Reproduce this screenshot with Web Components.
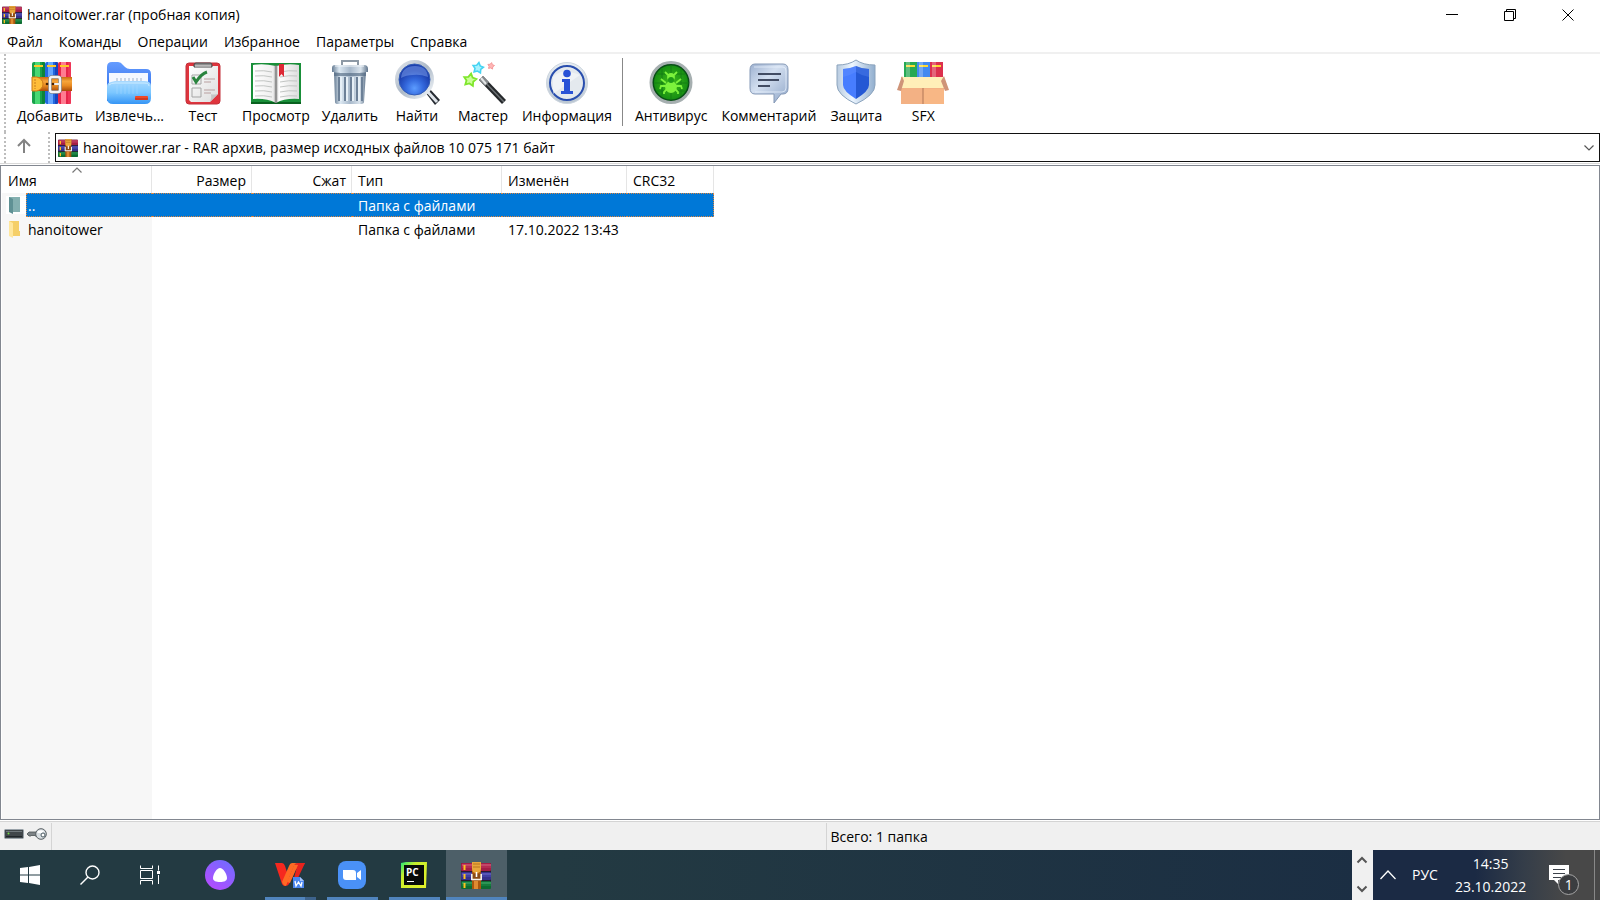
<!DOCTYPE html>
<html lang="ru">
<head>
<meta charset="utf-8">
<title>hanoitower.rar (пробная копия)</title>
<style>
  body {
    margin: 0;
    font: 14px/20px "Open Sans", "Noto Sans", sans-serif;
    color: #000;
    background: #fff;
  }
</style>
</head>
<body>
<archive-window></archive-window>

<script>
const books = (x, c1, c2, c3) => `
  <rect x="${x}" y="2" width="13" height="42" rx="2" fill="${c1}"/>
  <rect x="${x + 3}" y="2" width="5" height="42" fill="${c2}"/>
  <rect x="${x + 10}" y="2" width="3" height="42" rx="1" fill="${c3}"/>
  <rect x="${x + 2}" y="5" width="9" height="2" fill="#ffc928"/>`;

const star = (cx, cy, r) => {
  const points = [];
  for (let i = 0; i < 10; i++) {
    const a = Math.PI * i / 5 - 1.4;
    const d = i % 2 ? r * 0.55 : r;
    points.push(`${(cx + d * Math.cos(a)).toFixed(1)},${(cy + d * Math.sin(a)).toFixed(1)}`);
  }
  return points.join(" ");
};

const ICONS = {
  rar: ["0 0 30 27", `
    <rect y="1" width="30" height="25" rx="1" fill="#2b1a30"/>
    <rect y="1" width="30" height="8" rx="1" fill="#a51d45"/>
    <path d="M1 3h29" stroke="#e0708c"/><path d="M1 5h29" stroke="#c23a60"/>
    <rect y="10" width="30" height="8" rx="1" fill="#35308c"/>
    <path d="M1 12h29" stroke="#7a7ae0"/><path d="M1 14h29" stroke="#4c4cb8"/>
    <rect y="19" width="30" height="8" rx="1" fill="#0d6b31"/>
    <path d="M1 21h29" stroke="#4fc07a"/><path d="M1 23h29" stroke="#1f8f48"/>
    <path d="M3.500 3v5M3.500 12v5M3.500 21v5" stroke="#ffc21f" stroke-width="2"/>
    <path d="M11 0h9v27h-9z" fill="#a9560f"/>
    <path d="M11 0h9v7q0 4-4.500 4T11 7z" fill="#e9a63b"/>
    <path d="M13 19h4v8h-4z" fill="#df8a31"/>
    <path d="M12 2h7M12 5h7" stroke="#b87420"/>
    <path d="M10.800 12v5.500h9.400V12" fill="#8a4a16" stroke="#f4f1eb" stroke-width="1.600"/>
    <path d="M15.500 10v5" stroke="#fff" stroke-width="1.600"/>`],
  add: ["-1 0 48 48", `
    <defs><linearGradient id="b" x2="0" y2="1"><stop stop-color="#c96a12"/><stop offset=".3" stop-color="#f6a63b"/><stop offset=".6" stop-color="#ea8c22"/><stop offset="1" stop-color="#a94b08"/></linearGradient></defs>
    ${books(5, "#18a04a", "#48d873", "#0d8438")}
    ${books(18, "#2468df", "#65a6ff", "#1746bd")}
    ${books(31, "#e62549", "#ff7c91", "#ef3557")}
    <path d="M5 17h40v14H5z" fill="url(#b)"/>
    <path d="M5 17h5q6 2 6 7t-6 7H5z" fill="#ffbd39" stroke="#c97816"/>
    <path d="M8 19v10" stroke="#c57d1c" stroke-dasharray="2 1"/>
    <rect x="23" y="17" width="10" height="15" rx="2" fill="none" stroke="#777" stroke-width="3.600"/>
    <rect x="23" y="17" width="10" height="15" rx="2" fill="none" stroke="#f4f4f4" stroke-width="2.400"/>
    <path d="M26 24h7" stroke="#eee" stroke-width="2"/>
    <circle cx="20" cy="24" r="1.300" fill="#482000"/><circle cx="26" cy="24" r="1.300" fill="#482000"/>`],
  extract: ["0 0 48 48", `
    <defs><linearGradient id="a" x2="0" y2="1"><stop stop-color="#659cff"/><stop offset="1" stop-color="#2263e4"/></linearGradient>
    <linearGradient id="b" x2="0" y2="1"><stop stop-color="#a7d9ff"/><stop offset=".5" stop-color="#7cc7ff"/><stop offset="1" stop-color="#3595f5"/></linearGradient></defs>
    <path d="M2 41V7q0-5 5-5h6q3 0 5 3l2 2q2 2 5 2h16q5 0 5 5v24z" fill="url(#a)"/>
    <path d="M4 13h39v12H4z" fill="#f4f8ff"/>
    <path d="M12 18v6M16 18v6M20 18v6M24 18v6M28 18v6M32 18v6M36 18v6" stroke="#a0b3ca"/>
    <path d="M2 26q0-3 4-4l4-1h29q7 0 7 5v12q0 6-6 6H8q-6 0-6-6z" fill="url(#b)"/>
    <path d="M4 25q2-2 6-2h29q5 0 5 3" fill="none" stroke="#caebff"/>
    <path d="M12 25v9M16 25v9M20 25v9M24 25v9M28 25v9M32 25v9" stroke="#b4dfff" opacity=".4"/>
    <rect x="30" y="36" width="13" height="4" rx="1" fill="#ef4a27"/><path d="M30 39h13" stroke="#ae2d1e"/>`],
  test: ["0 0 48 48", `
    <defs><linearGradient id="p" x2="1" y2="1"><stop stop-color="#fff"/><stop offset="1" stop-color="#ddd"/></linearGradient></defs>
    <rect x="7" y="3" width="34" height="41" rx="3" fill="#df343d" stroke="#c2303a"/>
    <path d="M10 6h29v28l-8 8H12l-2-2V6z" fill="url(#p)"/>
    <path d="M39 34q-6 1-7 0 1 4-1 8z" fill="#c4c4c4"/>
    <path d="M15 7V5q0-2 2-2h14q2 0 2 2v2z" fill="#8d8d8d" stroke="#484848"/>
    <path d="M16 6h16" stroke="#e4e4e4"/>
    <path d="M13 15h9v9h-9zM13 28h9v9h-9z" fill="none" stroke="#a5a5a5"/>
    <path d="m14 17 3 5q5-8 11-10" fill="none" stroke="#2a843e" stroke-width="3"/>
    <path d="M25 19h11M25 22h7M25 30h11M25 33h7" stroke="#b9a0a0"/>`],
  view: ["0 0 54 48", `
    <defs><linearGradient id="p"><stop stop-color="#fff"/><stop offset=".44" stop-color="#eee"/><stop offset=".5" stop-color="#9d9d9d"/><stop offset=".56" stop-color="#fff"/><stop offset="1" stop-color="#ddd"/></linearGradient></defs>
    <path d="M2 3h50v41H2z" fill="#198f39"/><path d="M2 43h50" stroke="#09611f" stroke-width="2"/>
    <path d="M4 5q10-2 23 1 12-3 23-1v34q-14-1-23 4-10-5-23-4z" fill="url(#p)"/>
    <path d="M6 11q9-1 17 1M6 16q9-1 17 1M6 21q9-1 17 1M6 26q9-1 17 1M6 31q9-1 17 1M6 36q9-1 17 1M31 12q9-2 17-1M31 17q9-2 17-1M31 22q9-2 17-1M31 27q9-2 17-1M31 32q9-2 17-1M31 37q9-2 17-1" fill="none" stroke="#c2c5c3"/>
    <path d="M26 5h2v38h-2z" fill="#777" opacity=".5"/>
    <path d="M30 4h5v13l-2.500-3-2.500 3z" fill="#dd2935"/>`],
  trash: ["0 0 48 48", `
    <defs><linearGradient id="m"><stop stop-color="#667c93"/><stop offset=".2" stop-color="#dce8f2"/><stop offset=".5" stop-color="#a7b8ca"/><stop offset=".8" stop-color="#d9e3ec"/><stop offset="1" stop-color="#60758c"/></linearGradient></defs>
    <path d="M16 5V1h16v4" fill="none" stroke="#8d99a5" stroke-width="2"/>
    <path d="M8 12h32l-2 30q0 2-4 2H12q-3 0-3-2z" fill="url(#m)"/>
    <path d="M13 17v24M19 17v24M25 17v24M31 17v24M36 17v24" stroke="#6c8097" stroke-width="2"/>
    <path d="M15 17v24M21 17v24M27 17v24M33 17v24" stroke="#e6eff6" stroke-width="2"/>
    <path d="M9 5h29q4 0 4 4v3H6V8q0-3 3-3z" fill="url(#m)"/><path d="M8 13h32v3H8z" fill="#536a83" opacity=".65"/>
    <path d="M9 6h29" stroke="#f4f8fb"/>`],
  find: ["0 0 48 48", `
    <defs><radialGradient id="g" cy=".75"><stop stop-color="#5c9cff"/><stop offset=".5" stop-color="#3469dd"/><stop offset="1" stop-color="#1c3fae"/></radialGradient>
    <linearGradient id="r" x2="1" y2="1"><stop stop-color="#dfe4ea"/><stop offset=".5" stop-color="#adb9c7"/><stop offset="1" stop-color="#f4f8fb"/></linearGradient></defs>
    <path d="m32 32 4-4 11 12-5 5z" fill="#252a31"/><path d="m34 31 10 11" stroke="#dfe4ea" stroke-width="3"/>
    <circle cx="21.500" cy="19.500" r="17.500" fill="url(#g)" stroke="url(#r)" stroke-width="4"/>
    <circle cx="21.500" cy="19.500" r="15.500" fill="none" stroke="#315bb6"/>
    <path d="M8 18Q9 6 22 6q12 0 13 11-8-3-15-2-7 0-12 3z" fill="#9abeff" opacity=".4"/>`],
  wizard: ["0 0 48 48", `
    <path d="m20 20 4-4 23 24-4 4z" fill="#25282b"/><path d="m22 18 23 24" stroke="#6c7174" stroke-width="1.500"/>
    <path d="m20 20 4-4 6 6-4 4z" fill="#85898c"/><path d="m22 18 5 6" stroke="#e4e6e7" stroke-width="2"/>
    <polygon points="${star(11, 20, 6.5)}" fill="#c9ff96" stroke="#7fe62c" stroke-width="1.800"/>
    <polygon points="${star(19, 8, 5.5)}" fill="#a6f2ff" stroke="#45d3f2" stroke-width="1.600"/>
    <polygon points="${star(32, 6, 3.5)}" fill="#ffb5b5" stroke="#f59a9a"/>`],
  info: ["0 1 48 48", `
    <defs><linearGradient id="r" x2="0" y2="1"><stop stop-color="#e8eef3"/><stop offset="1" stop-color="#b9c5d1"/></linearGradient></defs>
    <circle cx="24" cy="24" r="20.500" fill="url(#r)" stroke="#ccd5de"/>
    <circle cx="24" cy="24" r="17" fill="#e4e9ee" stroke="#294eae" stroke-width="2"/>
    <path d="M10 18q8-10 27-2l-27 19z" fill="#fff" opacity=".45"/>
    <circle cx="24" cy="14.500" r="3.800" fill="#2952d6"/><path d="M19 20h8v12h3v3H18v-3h3v-9h-2z" fill="#2952d6"/>`],
  virus: ["0 0 48 48", `
    <defs><radialGradient id="g"><stop stop-color="#3fbb1c"/><stop offset="1" stop-color="#168f12"/></radialGradient></defs>
    <circle cx="24" cy="22.500" r="20" fill="#084e16" stroke="#a6afb0" stroke-width="3"/>
    <circle cx="24" cy="22.500" r="17" fill="url(#g)"/>
    <path d="M24 5v35M7 23h35M10 14h28M10 31h28M15 9v27M34 9v27" stroke="#117a14" stroke-width=".8"/>
    <g fill="#7cf23c" stroke="#7cf23c" stroke-width="1.800"><ellipse cx="24" cy="27" rx="5" ry="5"/><circle cx="24" cy="17" r="3"/>
    <path fill="none" d="m19 23-5-4M19 26h-5l-1 3M20 29l-3 3v2M29 23l5-4M29 26h5l1 3M28 29l3 3v2M21 15l-3-3M27 15l3-3"/></g>
    <circle cx="24" cy="20" r="3" fill="#1f9a18"/>`],
  comment: ["0 0 48 48", `
    <defs><linearGradient id="c" x2="1" y2="1"><stop stop-color="#9db1d0"/><stop offset=".4" stop-color="#d3dff0"/><stop offset="1" stop-color="#8fa6c8"/></linearGradient></defs>
    <path d="M10 4h28q5 0 5 6v18q0 6-5 6h-2l-7 9v-9H10q-5 0-5-6V10q0-6 5-6z" fill="url(#c)" stroke="#8498b6"/>
    <path d="M9 7h29q3 0 3 4v17q0 4-4 4H10" fill="none" stroke="#edf5ff" opacity=".7"/>
    <path d="M13 14h23M13 20h21M13 26h12" stroke="#424c63" stroke-width="2"/>`],
  shield: ["0 0 48 48", `
    <defs><linearGradient id="s"><stop stop-color="#b8cbe0"/><stop offset=".4" stop-color="#edf6ff"/><stop offset="1" stop-color="#91aece"/></linearGradient></defs>
    <path d="M24 0q7 5 19 5v20q0 10-19 19Q5 35 5 25V5q12 0 19-5z" fill="url(#s)" stroke="#8ca4bd"/>
    <path d="M24 6q6 3 13 3v16q0 6-13 14z" fill="#2458d4"/><path d="M24 6q-7 3-13 3v16q0 6 13 14z" fill="#477dff"/>
    <path d="M24 6q6 3 13 3v8q-7-1-13-5-7 4-13 5V9q7 0 13-3z" fill="#75a1ff" opacity=".25"/>`],
  sfx: ["0 0 54 48", `
    <g fill="#28a953"><path d="M8 2h13v16H8z"/><path fill="#438af0" d="M21 2h13v16H21z"/><path fill="#dc304d" d="M34 2h13v16H34z"/></g>
    <path d="M10 6h9M23 6h9M36 6h9" stroke="#ffda31" stroke-width="2"/>
    <path d="M12 2v16M25 2v16M38 2v16" stroke="#fff" stroke-width="4" opacity=".25"/>
    <path d="M5 17h43v27H5z" fill="#f3b184"/><path d="M27 29h21v15H27z" fill="#f8b785"/>
    <path d="M6 17h42l4 11H4z" fill="#ffefb8"/><path d="m6 16-5 14 4 1 3-10zM48 16l5 14-4 1-4-10z" fill="#cf9478"/>
    <path d="M27 28v16" stroke="#b07757"/>`],
  up: ["0 0 16 16", `<path d="M8 15V2M2 8l6-6 6 6" fill="none" stroke="#838383" stroke-width="2"/>`],
  chevron: ["0 0 10 6", `<path d="m.500.500 4.500 4.500L9.500.500" fill="none" stroke="currentColor" stroke-width="1.200"/>`],
  chevronBold: ["0 0 10 6", `<path d="m.500.500 4.500 4.500L9.500.500" fill="none" stroke="currentColor" stroke-width="2"/>`],
  chevronThin: ["0 0 16 10", `<path d="m.500 9 7.500-8 7.500 8" fill="none" stroke="currentColor" stroke-width="1.300"/>`],
  minimize: ["0 0 12 12", `<path d="M0 5.500h12" stroke="#000"/>`],
  restore: ["0 0 12 12", `<path d="M.500 2.500h9v9h-9zM2.500 2V.500h9v9H10" fill="none" stroke="#000"/>`],
  close: ["0 0 12 12", `<path d="m.500.500 11 11m0-11-11 11" stroke="#000"/>`],
  folderUp: ["0 0 14 18", `<path d="M1 1h11v15H4z" fill="#84b0b0"/><path d="m1 1 4 2v15l-4-2z" fill="#5f9194"/>`],
  folder: ["0 0 14 18", `<path d="M1 1h10v10h1v5H4z" fill="#f5cf68"/><path d="m1 1 4 2v15l-4-2z" fill="#ffe79d"/>`],
  disk: ["0 0 20 12", `<rect x=".500" y="1.500" width="19" height="9" rx="1" fill="#40464a" stroke="#98a1a8"/><path d="M2 3.500h16" stroke="#6f777c"/><path d="M2 8.500h16" stroke="#20262b"/><circle cx="4.500" cy="5.500" r="1" fill="#71dd43"/>`],
  key: ["0 0 20 12", `<path d="M0 6l2-2h9v4H8L7 7 6 8 5 7 4 8H2z" fill="#7d8386" stroke="#4d5356" stroke-width=".8"/><circle cx="14" cy="6" r="5.300" fill="#d8dee2" stroke="#565d61"/><path d="M10 4q3-3 7-1l-2 2h-4z" fill="#fff"/><circle cx="16" cy="7" r="2" fill="#fff" stroke="#4b5b61"/>`],
  start: ["0 0 20 20", `<path fill="#fff" d="M0 3l8-1v7.500H0zM9 2l11-2v9.500H9zM0 10.500h8V18l-8-1zM9 10.500h11V20L9 18z"/>`],
  search: ["0 0 20 20", `<circle cx="12.500" cy="7.500" r="6.500" fill="none" stroke="#fff" stroke-width="1.400"/><path d="m8 12-7.500 7.500" stroke="#fff" stroke-width="1.400"/>`],
  tasks: ["0 0 20 20", `<path d="M.500.500v3h12v-3M.500 19.500v-4h12v4M.500 5.500h12v8H.500zM18.500.500v5M18.500 10v9" fill="none" stroke="#fff"/><path d="M17 6h3v3h-3z" fill="#fff"/>`],
  alice: ["0 0 30 30", `<defs><linearGradient id="a" x1=".1" y1="1" x2=".8" y2="0"><stop stop-color="#b94aff"/><stop offset="1" stop-color="#716bff"/></linearGradient></defs><circle cx="15" cy="15" r="15" fill="url(#a)"/><path d="M15 8c3 0 7 6 7 10 0 3-3 4-7 4s-7-1-7-4c0-4 4-10 7-10z" fill="#fff"/>`],
  wps: ["0 0 30 28", `<path d="M0 2h7q2 0 3 3l4 12 5-12q1-3 4-3h7l-4 6h-5l-7 15q-1 2-4 2-2 0-3-2z" fill="#f6281f"/><path d="M14 17 19 5q1-3 4-3h-6q-2 0-3 3L7 21l1 2q1 2 3 2z" fill="#ff6a24"/><path d="M23 2h7l-7 15h-4z" fill="#e8231d"/><path d="M19 4h4l-8 18-3-1z" fill="#ff6a24"/>
    <path d="M18 16h7l4 4v7H18z" fill="#4a86f0"/><path d="M25 16l4 4h-4z" fill="#a5c4fb"/><path d="m20 20 1 5 2.500-4 2.500 4 1-4" fill="none" stroke="#fff" stroke-width="1.300"/>`],
  zoom: ["0 0 28 28", `<rect width="28" height="28" rx="8" fill="#4a91f7"/><path d="M5 9h10q3 0 3 3v7H8q-3 0-3-3zM19 12l4-3v10l-4-3z" fill="#fff"/>`],
  pycharm: ["0 0 26 26", `<defs><linearGradient id="p" x2="1" y2="1"><stop stop-color="#20e678"/><stop offset=".3" stop-color="#c8ee2c"/><stop offset="1" stop-color="#e6f02a"/></linearGradient></defs>
    <path d="M0 1 5 0h21l-1 26H0z" fill="url(#p)"/><path d="M3 3h20v20H3z" fill="#080b09"/><text x="5" y="13.500" font-family="Open Sans" font-size="10" font-weight="700" fill="#fff">PC</text><path d="M6 19.500h7" stroke="#fff"/>`],
  notice: ["0 0 20 20", `<path d="M0 0h20v15H9v4l-4-4H0z" fill="#fff"/><path d="M4 4.500h12M4 8.500h12M4 12.500h8" stroke="#3d434b"/>`]
};

class BaseElement extends HTMLElement {
  constructor() {
    super();
    this.shadow = this.attachShadow({ mode: "open" });
  }

  connectedCallback() {
    this.render();
  }
}

class AppIcon extends BaseElement {
  render() {
    const [box, art] = ICONS[this.getAttribute("name")];
    const [, , w, h] = box.split(" ");
    const width = this.getAttribute("width") || w;
    const height = this.getAttribute("height") || h;
    this.shadow.innerHTML = `
      <style>
        :host { display: inline-flex; flex: none; }
        svg { display: block; overflow: visible; }
      </style>
      <svg viewBox="${box}" width="${width}" height="${height}" aria-hidden="true">${art}</svg>
    `;
  }
}

class TitleBar extends BaseElement {
  render() {
    this.shadow.innerHTML = `
      <style>
        :host { display: flex; align-items: center; height: 29px; padding: 0 3px 0 2px; }
        span { flex: 1; padding-left: 5px; }
        button {
          width: 58px; height: 28px; padding: 0; border: 0; background: none;
          display: flex; align-items: center; justify-content: center;
        }
      </style>
      <app-icon name="rar" width="20" height="18"></app-icon>
      <span><slot></slot></span>
      <button aria-label="Свернуть"><app-icon name="minimize"></app-icon></button>
      <button aria-label="Восстановить"><app-icon name="restore"></app-icon></button>
      <button aria-label="Закрыть"><app-icon name="close"></app-icon></button>
    `;
  }
}

class MenuBar extends BaseElement {
  render() {
    this.shadow.innerHTML = `
      <style>
        :host { display: block; border-bottom: 2px solid #f0f0f0; }
        nav { display: flex; gap: 16px; padding: 3px 7px 0; }
        a { color: inherit; text-decoration: none; }
      </style>
      <nav>
        <a href="#">Файл</a>
        <a href="#">Команды</a>
        <a href="#">Операции</a>
        <a href="#">Избранное</a>
        <a href="#">Параметры</a>
        <a href="#">Справка</a>
      </nav>
    `;
  }
}

class ToolButton extends BaseElement {
  render() {
    this.shadow.innerHTML = `
      <style>
        :host { display: block; }
        button {
          display: flex; flex-direction: column; align-items: center;
          min-width: 66px; padding: 0 var(--tool-padding, 6px); border: 0; background: none;
          font: inherit; line-height: 16px; color: inherit; white-space: nowrap;
        }
      </style>
      <button><app-icon name="${this.getAttribute("icon")}"></app-icon><slot></slot></button>
    `;
  }
}

class ToolBar extends BaseElement {
  render() {
    this.shadow.innerHTML = `
      <style>
        :host { display: flex; height: 72px; padding: 6px 0 0 4px; }
        .grip { border-left: 2px dotted #bdbdbd; margin: -6px 5px 0 0; }
        .group { display: flex; }
        .extra { --tool-padding: 7px; }
        hr { width: 1px; height: 68px; margin: -2px 5px 0 4px; border: 0; background: #888; }
      </style>
      <div class="grip"></div>
      <div class="group">
        <tool-button icon="add">Добавить</tool-button>
        <tool-button icon="extract">Извлечь...</tool-button>
        <tool-button icon="test">Тест</tool-button>
        <tool-button icon="view">Просмотр</tool-button>
        <tool-button icon="trash">Удалить</tool-button>
        <tool-button icon="find">Найти</tool-button>
        <tool-button icon="wizard">Мастер</tool-button>
        <tool-button icon="info">Информация</tool-button>
      </div>
      <hr>
      <div class="group extra">
        <tool-button icon="virus">Антивирус</tool-button>
        <tool-button icon="comment">Комментарий</tool-button>
        <tool-button icon="shield">Защита</tool-button>
        <tool-button icon="sfx">SFX</tool-button>
      </div>
    `;
  }
}

class AddressBar extends BaseElement {
  render() {
    this.shadow.innerHTML = `
      <style>
        :host { display: flex; height: 31px; padding-left: 4px; border-bottom: 1px solid #d9d9d9; }
        .grip { border-left: 2px dotted #bdbdbd; }
        button { width: 42px; padding: 0 6px 0 0; border: 0; background: none; }
        label {
          flex: 1; display: grid; align-items: center; height: 27px; margin: 1px 0 0 5px;
          border: 1px solid #111;
        }
        label > * { grid-area: 1 / 1; }
        label app-icon { margin-left: 2px; }
        label .arrow { justify-self: end; margin-right: 5px; color: #555; pointer-events: none; }
        select {
          appearance: none; height: 27px; padding: 0 24px 0 27px; border: 0; outline: 0;
          background: none; font: inherit; color: inherit;
        }
      </style>
      <div class="grip"></div>
      <button aria-label="На уровень вверх"><app-icon name="up"></app-icon></button>
      <div class="grip"></div>
      <label>
        <select aria-label="Адрес"><option>hanoitower.rar - RAR архив, размер исходных файлов 10 075 171 байт</option></select>
        <app-icon name="rar" width="20" height="18"></app-icon>
        <app-icon class="arrow" name="chevron"></app-icon>
      </label>
    `;
  }
}

class FileList extends BaseElement {
  render() {
    this.shadow.innerHTML = `
      <style>
        :host {
          display: block; flex: 1; margin-top: 1px; border: 1px solid #828790;
          background: linear-gradient(#fff, #fff) 0 0 / 100% 27px no-repeat,
            linear-gradient(#f7f7f7, #f7f7f7) 1px 0 / 150px 100% no-repeat;
        }
        table { width: 713px; table-layout: fixed; border-collapse: separate; border-spacing: 0; }
        th, td { box-sizing: border-box; height: 24px; padding: 2px 6px 0; text-align: left; font-weight: 400; white-space: nowrap; }
        th { position: relative; height: 27px; border-right: 1px solid #e5e5e5; }
        th:first-child { padding-left: 7px; }
        th.num { text-align: right; padding-right: 5px; }
        th app-icon { position: absolute; top: 1px; left: 71px; transform: rotate(180deg); color: #777; }
        td:first-child { padding: 0; }
        .name { display: flex; align-items: center; height: 24px; }
        .name app-icon { padding: 0 4px 0 7px; }
        .name span { flex: 1; padding: 2px 0 0 2px; }
        .selected { color: #fff; }
        .selected td:not(:first-child), .selected span {
          background: #0078d7; border: 1px dotted #dd8640; border-width: 1px 0;
        }
        .selected span { border-left-width: 1px; padding-left: 1px; }
        .selected app-icon { background: linear-gradient(#fff, #fff) 100% 0 / 20px 100% no-repeat; }
        .selected td:last-child { border-right-width: 1px; }
      </style>
      <table>
        <colgroup>
          <col style="width: 151px"><col style="width: 100px"><col style="width: 100px">
          <col style="width: 150px"><col style="width: 125px"><col style="width: 87px">
        </colgroup>
        <thead>
          <tr>
            <th>Имя<app-icon name="chevron"></app-icon></th>
            <th class="num">Размер</th><th class="num">Сжат</th>
            <th>Тип</th><th>Изменён</th><th>CRC32</th>
          </tr>
        </thead>
        <tbody>
          <tr class="selected">
            <td><div class="name"><app-icon name="folderUp"></app-icon><span>..</span></div></td>
            <td></td><td></td><td>Папка с файлами</td><td></td><td></td>
          </tr>
          <tr>
            <td><div class="name"><app-icon name="folder"></app-icon><span>hanoitower</span></div></td>
            <td></td><td></td><td>Папка с файлами</td><td>17.10.2022 13:43</td><td></td>
          </tr>
        </tbody>
      </table>
    `;
  }
}

class StatusBar extends BaseElement {
  render() {
    this.shadow.innerHTML = `
      <style>
        :host { display: flex; height: 28px; margin-top: 1px; border-top: 1px solid #d4d4d4; background: #f0f0f0; }
        div { flex: 1; display: flex; align-items: center; padding-left: 4px; margin-top: 1px; }
        div + div { border-left: 1px solid #d4d4d4; }
        .icons { flex: none; width: 47px; gap: 3px; height: 22px; }
      </style>
      <div class="icons"><app-icon name="disk"></app-icon><app-icon name="key"></app-icon></div>
      <div></div>
      <div><slot></slot></div>
    `;
  }
}

class TaskButton extends BaseElement {
  render() {
    this.shadow.innerHTML = `
      <style>
        :host { display: block; }
        button {
          position: relative; display: flex; align-items: center; justify-content: center;
          width: 60px; height: 50px; padding: 0; border: 0; background: none;
        }
        :host([running]) button { width: 62px; padding-right: 2px; }
        :host([running]) button::after {
          content: ""; position: absolute; left: 5px; right: 6px; bottom: 0; height: 3px; background: #5084bd;
        }
        :host([grouped]) button::after { background: linear-gradient(90deg, #5084bd 40px, #3d638c 40px); }
        :host([active]) button { width: 61px; padding-right: 1px; background: #4d5f68; }
        :host([active]) button::after { left: 0; right: 0; }
      </style>
      <button aria-label="${this.getAttribute("label")}"><app-icon name="${this.getAttribute("icon")}"></app-icon></button>
    `;
  }
}

class SystemTray extends BaseElement {
  render() {
    this.shadow.innerHTML = `
      <style>
        :host { display: flex; color: #fff; }
        .scroll {
          display: flex; flex-direction: column; justify-content: space-between; align-items: center;
          width: 21px; padding: 7px 2px 8px 0; box-sizing: border-box; background: #f0f0f0; color: #555;
        }
        .tray {
          display: flex; align-items: center; box-sizing: border-box; width: 227px; padding-left: 7px;
          background: linear-gradient(90deg, #1b2a44 45%, #343d49 66%, #484848 85%);
        }
        button { position: relative; display: flex; padding: 0; border: 0; background: none; font: inherit; color: inherit; }
        .flip { transform: rotate(180deg); }
        .lang { margin-left: 16px; }
        .clock { margin-left: 17px; line-height: 23px; text-align: center; }
        .notice { margin: 0 0 0 23px; }
        .badge {
          position: absolute; left: 9px; top: 9px; width: 19px; height: 19px; border: 1px solid #a5a5a5;
          border-radius: 50%; background: #3b3d40; line-height: 19px; text-align: center;
        }
        .desktop { align-self: stretch; width: 6px; margin-left: auto; border-left: 1px solid #888; }
      </style>
      <div class="scroll">
        <button aria-label="Вверх"><app-icon class="flip" name="chevronBold"></app-icon></button>
        <button aria-label="Вниз"><app-icon name="chevronBold"></app-icon></button>
      </div>
      <div class="tray">
        <button aria-label="Скрытые значки"><app-icon name="chevronThin"></app-icon></button>
        <button class="lang">РУС</button>
        <div class="clock">14:35<br>23.10.2022</div>
        <button class="notice" aria-label="Уведомления"><app-icon name="notice"></app-icon><span class="badge">1</span></button>
        <button class="desktop" aria-label="Свернуть все окна"></button>
      </div>
    `;
  }
}

class TaskBar extends BaseElement {
  render() {
    this.shadow.innerHTML = `
      <style>
        :host { display: flex; height: 50px; background: linear-gradient(90deg, #233a42 35%, #1b2e43 85%); }
        .pinned, .running { display: flex; }
        .alice { margin: 0 10px; }
        system-tray { margin-left: auto; }
      </style>
      <div class="pinned">
        <task-button icon="start" label="Пуск"></task-button>
        <task-button icon="search" label="Поиск"></task-button>
        <task-button icon="tasks" label="Представление задач"></task-button>
        <task-button class="alice" icon="alice" label="Алиса"></task-button>
      </div>
      <div class="running">
        <task-button running grouped icon="wps" label="WPS Office"></task-button>
        <task-button running icon="zoom" label="Zoom"></task-button>
        <task-button running icon="pycharm" label="PyCharm"></task-button>
        <task-button running active icon="rar" label="WinRAR"></task-button>
      </div>
      <system-tray></system-tray>
    `;
  }
}

class ArchiveWindow extends BaseElement {
  render() {
    this.shadow.innerHTML = `
      <style>
        :host { display: flex; flex-direction: column; height: 100vh; }
      </style>
      <title-bar>hanoitower.rar (пробная копия)</title-bar>
      <menu-bar></menu-bar>
      <tool-bar></tool-bar>
      <address-bar></address-bar>
      <file-list></file-list>
      <status-bar>Всего: 1 папка</status-bar>
      <task-bar></task-bar>
    `;
  }
}

customElements.define("app-icon", AppIcon);
customElements.define("title-bar", TitleBar);
customElements.define("menu-bar", MenuBar);
customElements.define("tool-button", ToolButton);
customElements.define("tool-bar", ToolBar);
customElements.define("address-bar", AddressBar);
customElements.define("file-list", FileList);
customElements.define("status-bar", StatusBar);
customElements.define("task-button", TaskButton);
customElements.define("system-tray", SystemTray);
customElements.define("task-bar", TaskBar);
customElements.define("archive-window", ArchiveWindow);
</script>
</body>
</html>
